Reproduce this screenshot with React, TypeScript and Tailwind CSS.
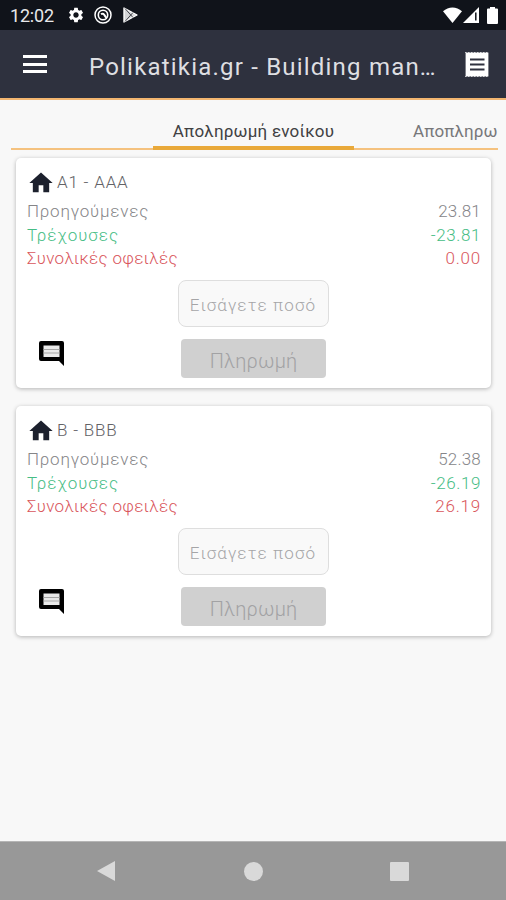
import React, { useState } from 'react';
import { MdHome, MdSettings } from 'react-icons/md';

const apartments = [
    { name: "A1 - AAA", previous: "23.81", current: "-23.81", total: "0.00" },
    { name: "B - BBB", previous: "52.38", current: "-26.19", total: "26.19" },
];

const StatusBar = () => {
    return (
        <div className="flex h-[30px] items-center bg-[#10131a] pl-[10px] pr-[8px] text-white">
            <span className="w-[45px] whitespace-nowrap pt-[2px] text-[18px] leading-none tracking-[-0.2px] text-[#e8e8ea]">12:02</span>
            <MdSettings className="ml-[12px] size-[18px]" />
            <svg className="ml-[9px] size-[18px]" viewBox="0 0 18 18" fill="none" stroke="currentColor">
                <circle cx="9" cy="9" r="8" strokeWidth="1.5" />
                <circle cx="9" cy="9" r="4.7" strokeWidth="1.6" />
                <path d="M7 8.200q2-1.200 3 .3t2.500 3.500" strokeWidth="2" />
            </svg>
            <svg className="ml-[11px] h-[16px] w-[15px]" viewBox="0 0 15 16">
                <path d="M1 1v14L14 8z" fill="#d5d6d8" stroke="#fff" strokeWidth="1.4" strokeLinejoin="round" />
                <path d="M2 1.500L10 10.500M2 14.500L10 5.500" stroke="#33363c" strokeWidth="0.9" />
            </svg>
            <svg className="ml-auto h-[16px] w-[19px]" viewBox="0 0 19 16" fill="#fff">
                <path d="M9.500 16L0 4.200C5.500-.9 13.500-.9 19 4.200z" />
            </svg>
            <svg className="ml-px h-[16px] w-[16px]" viewBox="0 0 16 16">
                <path d="M16 0v16H0z" fill="#fff" />
                <path d="M12.800 5.500v8" stroke="#10131a" strokeWidth="1.5" />
            </svg>
            <svg className="ml-[8px] h-[17px] w-[11px]" viewBox="0 0 11 17" fill="#fff">
                <path d="M3 0h5v1.500h2q1 0 1 1V16q0 1-1 1H1q-1 0-1-1V2.500q0-1 1-1h2z" />
            </svg>
        </div>
    )
}

const Header = () => {
    return (
        <div className="flex h-[70px] items-center border-b-2 border-[#f3b670] bg-[#2e313e] pl-[23px] pr-[17px]">
            <button className="flex h-[18px] w-[24px] flex-col justify-between">
                <span className="h-[3px] w-full bg-white"></span>
                <span className="h-[3px] w-full bg-white"></span>
                <span className="h-[3px] w-full bg-white"></span>
            </button>
            <h1 className="ml-[42px] w-[356px] whitespace-nowrap pt-[6px] text-[24px] leading-none tracking-[1.2px] text-[#dedfe2]">
                Polikatikia.gr - Building man<span className="tracking-[-1.500px]">...</span>
            </h1>
            <svg className="ml-auto h-[25px] w-[24px]" viewBox="0 0 24 25">
                <path d="M.6 .6h22.800v23.800H.6z" fill="#fff" />
                <path d="M0 .4h24M0 24.600h24" stroke="#fff" strokeWidth="0.8" strokeDasharray="1.500 1.500" />
                <path d="M5 7.500h14.500M5 12.500h14.500M5 17.500h14.500" stroke="#2e313e" strokeWidth="2.2" />
            </svg>
        </div>
    )
}

const Tabs = () => {
    return (
        <div className="flex h-[50px] items-stretch pl-[11px] pr-[8px] text-[17px]">
            <div className="w-[142px] shrink-0 border-b-2 border-[#f5c27f]"></div>
            <button className="w-[201px] shrink-0 whitespace-nowrap border-b-4 border-[#e9a93a] pt-[16px] leading-none tracking-[0.2px] text-[#414143]">
                Αποληρωμή ενοίκου
            </button>
            <button className="min-w-0 flex-1 whitespace-nowrap border-b-2 border-[#f5c27f] pl-[59px] pt-[14px] text-left leading-none tracking-[0.1px] text-[#77777a]">
                Αποπληρω
            </button>
        </div>
    )
}

const Card = ({ item }: any) => {

    let [amount, setAmount] = useState("");

    return (
        <div className="h-[230px] rounded-[5px] bg-white pl-[11px] pr-[10px] pt-[12px] font-light shadow-[0_1px_4px_rgba(0,0,0,0.28)]">
            <div className="flex h-[26px] items-center">
                <MdHome className="size-[28px] shrink-0 text-[#1c202d]" />
                <span className="ml-[2px] text-[17px] tracking-[0.8px] text-[#626266]">{item.name}</span>
            </div>
            <div className="mt-[4px] text-[17px] leading-[23.500px]">
                <div className="flex justify-between text-[#858588]">
                    <span className="tracking-[0.8px]">Προηγούμενες</span>
                    <span className="tracking-[0.2px]">{item.previous}</span>
                </div>
                <div className="flex justify-between text-[#46bd85]">
                    <span className="tracking-[1px]">Τρέχουσες</span>
                    <span className="tracking-[0.6px]">{item.current}</span>
                </div>
                <div className="flex justify-between text-[#d9565c]">
                    <span className="tracking-[0.3px]">Συνολικές οφειλές</span>
                    <span className="tracking-[0.8px]">{item.total}</span>
                </div>
            </div>
            <div className="ml-[-2px] mt-[9px] flex justify-center">
                <input
                    value={amount}
                    onChange={(e) => setAmount(e.target.value)}
                    placeholder="Εισάγετε ποσό"
                    className="h-[47px] w-[151px] rounded-[8px] border-[1.500px] border-[#dedede] bg-[#f9f9f9] px-0 pt-[3px] text-center text-[17px] tracking-[1.100px] placeholder:text-[#a5a5a7]"
                />
            </div>
            <div className="mt-[12px] grid h-[39px] grid-cols-[154px_145px]">
                <svg className="ml-[12px] mt-[2px] h-[25px] w-[25px]" viewBox="0 0 25 25">
                    <path d="M2 0h21q2 0 2 2v23l-5-5H2q-2 0-2-2V2q0-2 2-2z" fill="#000" />
                    <path d="M4.500 4.500h16v11.500h-16z" fill="#e9e9e9" />
                    <path d="M4.500 8.500h16M4.500 12h16" stroke="#a5a5a5" strokeWidth="1" />
                </svg>
                <button className="rounded-[4px] bg-[#d0d0d0] pt-[5px] text-[20px] leading-none tracking-[0.2px] text-[#a2a2a4]">
                    Πληρωμή
                </button>
            </div>
        </div>
    )
}

const NavBar = () => {
    return (
        <div className="flex h-[59px] items-center border-t border-[#b5b5b5] bg-[#989898] pl-[97px]">
            <svg className="h-[20px] w-[18px]" viewBox="0 0 18 20" fill="#d9d9d9">
                <path d="M18 0v20L0 10z" />
            </svg>
            <span className="ml-[129px] size-[19px] rounded-full bg-[#d9d9d9]"></span>
            <span className="ml-[127px] size-[19px] rounded-[1px] bg-[#d9d9d9]"></span>
        </div>
    )
}

const App = () => {
    return (
        <div className="flex h-[900px] w-[506px] flex-col overflow-hidden bg-[#f8f8f8] font-['Roboto','Noto_Sans',sans-serif]">
            <StatusBar />
            <Header />
            <Tabs />
            <div className="flex flex-1 flex-col gap-[18px] pl-[16px] pr-[15px] pt-[8px]">
                {apartments.map((item) => <Card key={item.name} item={item} />)}
            </div>
            <NavBar />
        </div>
    )
}

export default App
